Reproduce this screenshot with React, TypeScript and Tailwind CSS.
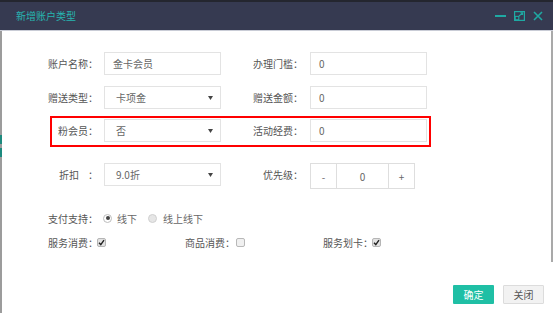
import React from "react";

function Arrow() {
  return (
    <svg width="5" height="4" viewBox="0 0 5 4" className="mr-[7px]">
      <path d="M0 0 L5 0 L2.5 4 Z" fill="#444" />
    </svg>
  );
}

function Input({ value }: { value: string }) {
  return (
    <div className="w-[117px] h-[23px] border border-[#e3e3e3] bg-white flex items-center pl-[8px] text-[10px] text-[#666]">
      {value}
    </div>
  );
}

function Select({ value }: { value: string }) {
  return (
    <div className="w-[117px] h-[23px] border border-[#e3e3e3] bg-white flex items-center justify-between pl-[11px] text-[10px] text-[#666]">
      <span>{value}</span>
      <Arrow />
    </div>
  );
}

function Label({ text, w, pr, gap = 0 }: { text: string; w: string; pr: string; gap?: number }) {
  return (
    <div className={`${w} ${pr} flex justify-end items-center text-[10px] text-[#555]`}>
      <span style={gap ? { marginRight: gap } : undefined}>{text}</span>
      <span>：</span>
    </div>
  );
}

function Check({ checked }: { checked: boolean }) {
  return (
    <div
      className={`w-[9px] h-[9px] rounded-[2px] border flex items-center justify-center ${
        checked ? "border-[#b5b5b5] bg-[#e2e2e2]" : "border-[#b8b8b8] bg-[#f0f0f0]"
      }`}
    >
      {checked && (
        <svg width="7" height="7" viewBox="0 0 7 7">
          <path d="M1 3.8 L2.8 5.6 L6 1.2" stroke="#222" strokeWidth="1.4" fill="none" />
        </svg>
      )}
    </div>
  );
}

function Radio({ checked }: { checked: boolean }) {
  return (
    <div
      className={`w-[9px] h-[9px] rounded-full border flex items-center justify-center ${
        checked ? "border-[#bdbdbd] bg-white" : "border-[#d0d0d0] bg-[#e6e6e6]"
      }`}
    >
      {checked && <div className="w-[4px] h-[4px] rounded-full bg-[#444]" />}
    </div>
  );
}

export default function App() {
  return (
    <div className="w-[553px] h-[313px] overflow-hidden bg-white flex flex-col font-['Noto_Sans_CJK_SC',sans-serif]">
      {/* title bar */}
      <div className="h-[2px] bg-[#24262f]" />
      <div className="h-[28px] bg-[#363a51] flex items-center justify-between pl-[16px] pr-[10px]">
        <span className="text-[10px] text-[#27b6b0] mt-[-1px]">新增账户类型</span>
        <div className="flex items-center gap-[8px] mt-[-1px]">
          <svg width="11" height="10" viewBox="0 0 11 10">
            <path d="M0 5 H11" stroke="#1fa9a3" strokeWidth="2" />
          </svg>
          <svg width="11" height="10" viewBox="0 0 11 10">
            <rect x="0.6" y="0.6" width="9.8" height="8.8" fill="none" stroke="#1fa9a3" strokeWidth="1.2" />
            <rect x="1.2" y="5.4" width="3.6" height="3.4" fill="none" stroke="#1fa9a3" strokeWidth="1.1" />
            <path d="M5 5 L8.6 1.8 M6.4 1.8 H8.6 V4" stroke="#1fa9a3" strokeWidth="1.1" fill="none" />
          </svg>
          <svg width="10" height="10" viewBox="0 0 10 10">
            <path d="M1 1 L9 9 M9 1 L1 9" stroke="#1fa9a3" strokeWidth="1.6" />
          </svg>
        </div>
      </div>
      <div className="h-[1px] bg-[#c9ccd6]" />

      <div className="flex flex-1">
        {/* left page strip */}
        <div className="w-[2px] bg-[#9c9c9c] flex flex-col">
          <div className="h-[104px]" />
          <div className="h-[9px] bg-[#1d8a7e]" />
          <div className="h-[4px]" />
          <div className="h-[9px] bg-[#1d8a7e]" />
        </div>

        {/* content */}
        <div className="flex-1 flex flex-col">
          <div className="flex h-[23px] mt-[21px]">
            <Label text="账户名称" w="w-[102px]" pr="pr-[6px]" />
            <Input value="金卡会员" />
            <Label text="办理门槛" w="w-[89px]" pr="pr-[7px]" />
            <Input value="0" />
          </div>

          <div className="flex h-[23px] mt-[11px]">
            <Label text="赠送类型" w="w-[102px]" pr="pr-[6px]" />
            <Select value="卡项金" />
            <Label text="赠送金额" w="w-[89px]" pr="pr-[7px]" />
            <Input value="0" />
          </div>

          <div className="ml-[48px] w-[381px] mt-[7px] border-2 border-[#ff0000] pt-[1px] pb-[3px] flex">
            <Label text="粉会员" w="w-[52px]" pr="pr-[6px]" />
            <Select value="否" />
            <Label text="活动经费" w="w-[89px]" pr="pr-[7px]" />
            <Input value="0" />
          </div>

          <div className="flex items-start mt-[16px]">
            <div className="h-[23px] flex">
              <Label text="折扣" w="w-[102px]" pr="pr-[6px]" gap={9} />
            </div>
            <Select value="9.0折" />
            <div className="h-[23px] flex">
              <Label text="优先级" w="w-[89px]" pr="pr-[7px]" />
            </div>
            <div className="h-[26px] flex border border-[#dedede] text-[10px] text-[#666]">
              <div className="w-[26px] flex items-center justify-center border-r border-[#dedede]">-</div>
              <div className="w-[52px] flex items-center justify-center border-r border-[#dedede]">0</div>
              <div className="w-[25px] flex items-center justify-center">+</div>
            </div>
          </div>

          <div className="flex items-center h-[14px] mt-[22px] text-[10px] text-[#555]">
            <Label text="支付支持" w="w-[102px]" pr="pr-[6px]" />
            <div className="ml-[-1px]">
              <Radio checked />
            </div>
            <span className="ml-[5px] text-[#666]">线下</span>
            <div className="ml-[11px]">
              <Radio checked={false} />
            </div>
            <span className="ml-[6px] text-[#666]">线上线下</span>
          </div>

          <div className="flex items-center h-[14px] mt-[10px] pl-[46px] text-[10px] text-[#555]">
            <span>服务消费：</span>
            <div className="ml-[-1px]">
              <Check checked />
            </div>
            <span className="ml-[79px]">商品消费：</span>
            <div className="ml-[1px]">
              <Check checked={false} />
            </div>
            <span className="ml-[78px]">服务划卡：</span>
            <div className="ml-[-1px]">
              <Check checked />
            </div>
          </div>

          <div className="flex justify-end gap-[9px] pr-[7px] mt-[36px] text-[10px]">
            <div className="w-[41px] h-[19px] bg-[#1fbfa5] text-white flex items-center justify-center rounded-[1px]">
              确定
            </div>
            <div className="w-[41px] h-[19px] bg-[#f2f2f2] border border-[#dcdcdc] text-[#555] flex items-center justify-center rounded-[1px]">
              关闭
            </div>
          </div>
        </div>

        {/* right page strip */}
        <div className="w-[2px] flex flex-col">
          <div className="h-[231px] bg-[#a9a9a9]" />
        </div>
      </div>
    </div>
  );
}
